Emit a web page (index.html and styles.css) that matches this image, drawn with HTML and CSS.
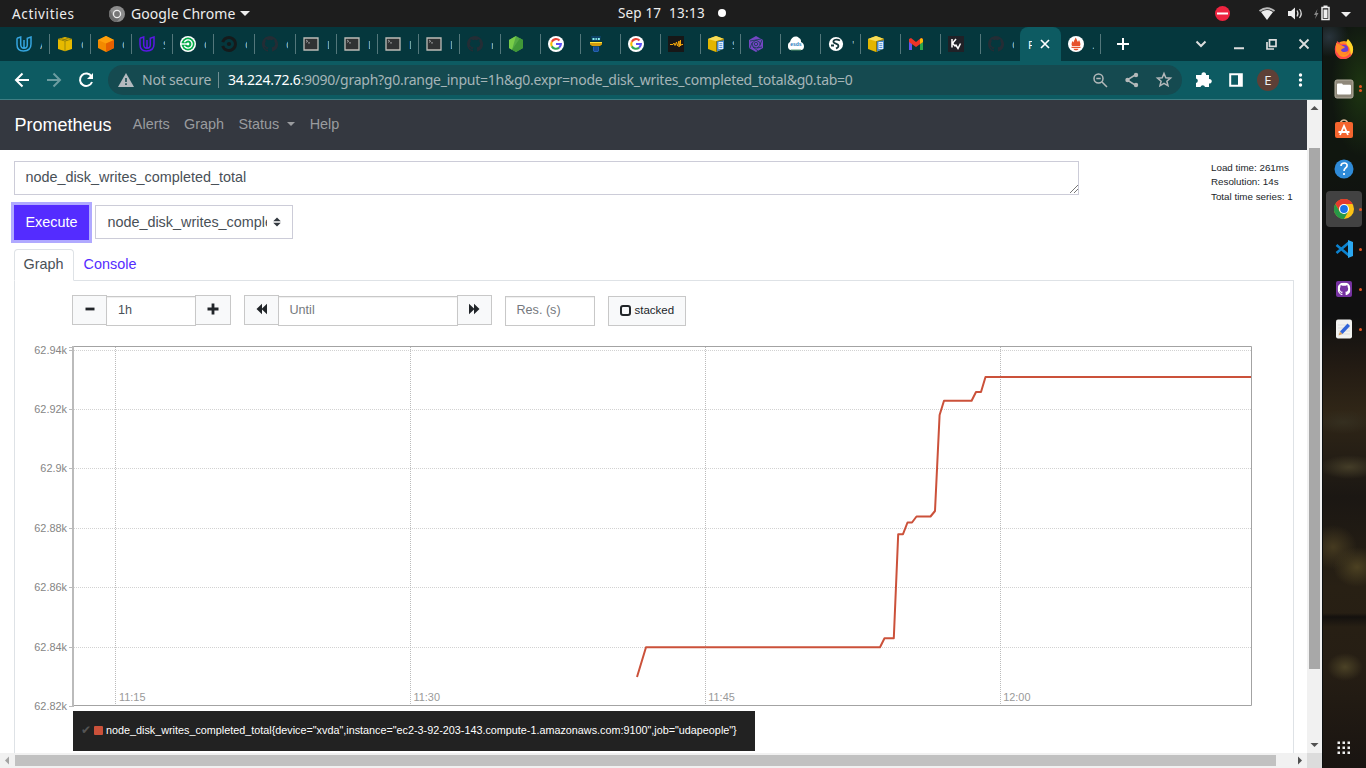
FILE: index.html
```html
<!DOCTYPE html>
<html lang="en">
<head>
<meta charset="utf-8">
<title>Prometheus Time Series Collection and Processing Server</title>
<link rel="stylesheet" href="styles.css">
</head>
<body>
<svg class="defs" aria-hidden="true">
  <symbol id="udacity" viewBox="0 0 16 16"><path d="M1 2.300 4.700 1v7.300c0 2.800 1.300 4 3.300 4M1 2.300v6.200c0 4.500 3 6.500 6.500 6.500 4.500 0 7.500-2.500 7.500-6.900V1l-3.700 1.300v6.500c0 2.300-1.300 3.500-3.300 3.500V4" fill="none" stroke="currentColor" stroke-width="1.500"/></symbol>
  <symbol id="cube" viewBox="0 0 16 16"><path d="m1 3 7-2 7 2v10l-7 2.300L1 13z" fill="#e6ba00"/><path d="m1 3 7 2 7-2M8 5v10.300M3.500 2.300l7 2M12 1.900l-7 2.300" fill="none" stroke="#7f730d" stroke-width=".7"/></symbol>
  <symbol id="orange" viewBox="0 0 16 16"><path d="m0 4 8-4 8 4v8l-8 4-8-4z" fill="#f38a00"/><path d="m0 4 8 3.500L16 4 8 0z" fill="#ff9f0b"/><path d="m8 7.500 8-3.500v8l-8 4z" fill="#e66000"/></symbol>
  <symbol id="cubedoc" viewBox="0 0 16 16"><path d="m0 3 8-3 8 3v9.500L8 16l-8-3z" fill="#e3b600"/><path d="m0 3 8-3 8 3-8 2.200z" fill="#f8dc57"/><path d="m8 5.200 8-2.200v9.500L8 16z" fill="#8d7508"/><path d="m9 5.500 7-1.300v8.500L9 15.500z" fill="#4488ce"/><path d="M10.500 6h4.500v7h-4.500z" fill="#e9f2fc"/><path d="M11.300 7.700h3M11.300 9.600h3M11.300 11.500h3" stroke="#4488ce" stroke-width=".9"/></symbol>
  <symbol id="circle" viewBox="0 0 16 16"><circle cx="8" cy="8" r="2.100" fill="currentColor"/><path d="M1.700 6.200A6.500 6.500 0 1 1 1.700 9.800" fill="none" stroke="currentColor" stroke-width="2.900"/></symbol>
  <symbol id="circle-green" viewBox="0 0 16 16"><circle cx="8" cy="8" r="8" fill="#fff"/><circle cx="8" cy="8" r="6.500" fill="#04aa49"/><path d="M4.300 6.300A4.100 4.100 0 1 1 4.300 9.700" fill="none" stroke="#fff" stroke-width="1.400"/><path d="M0 7.300h7.500v1.400H0z" fill="#fff"/><circle cx="8" cy="8" r="1.400" fill="#fff"/></symbol>
  <symbol id="github" viewBox="0 0 16 16"><path d="M8 0C3.58 0 0 3.58 0 8c0 3.54 2.29 6.53 5.47 7.59.4.07.55-.17.55-.38v-1.49c-2.01.37-2.53-.49-2.69-.94-.09-.23-.48-.94-.82-1.13-.28-.15-.68-.52-.01-.53.63-.01 1.08.58 1.23.82.72 1.21 1.87.87 2.33.66.07-.52.28-.87.51-1.07-1.78-.2-3.64-.89-3.64-3.95 0-.87.31-1.59.82-2.15-.08-.2-.36-1.02.08-2.12 0 0 .67-.21 2.2.82a7.6 7.6 0 0 1 4 0c1.53-1.04 2.2-.82 2.2-.82.44 1.1.16 1.92.08 2.12.51.56.82 1.27.82 2.15 0 3.07-1.87 3.75-3.65 3.95.29.25.54.73.54 1.48v2.2c0 .21.15.46.55.38A8 8 0 0 0 8 0z" fill="currentColor"/></symbol>
  <symbol id="term" viewBox="0 0 16 16"><path d="M1 2h14v12H1z" fill="#303233" stroke="#bdbdb8" stroke-width="1.300"/><path d="m3 4 1.700 1.200L3 6.400M5 6.900h2" fill="none" stroke="#ccc" stroke-width=".7"/></symbol>
  <symbol id="node" viewBox="0 0 16 16"><path d="m8 0 7 4v8l-7 4-7-4V4z" fill="#53a844"/><path d="M8 0 1 4v8l3 1.8z" fill="#77cc48"/><path d="m12 2.300 3 1.700v8l-7 4-4-2.200z" fill="#409737"/></symbol>
  <symbol id="google" viewBox="0 0 16 16"><circle cx="8" cy="8" r="8" fill="#fff"/><g fill="none" stroke-width="2.100"><path d="M11.500 4.500A4.800 4.800 0 0 0 3.800 5.700" stroke="#ea4335"/><path d="M3.800 5.700a5 5 0 0 0 0 4.700" stroke="#fbbc05"/><path d="M3.800 10.400a4.800 4.800 0 0 0 7.300 1.200" stroke="#34a853"/><path d="M8 8h4.900a4.800 4.800 0 0 1-1.800 3.600" stroke="#6051f6"/></g></symbol>
  <symbol id="tower" viewBox="0 0 16 16"><path d="M3 0h10l-1 5H4z" fill="#0d4268"/><path d="M4.500 2h2v2h-2zm3 0h1.300v2H7.500zm2.300 0h2v2h-2z" fill="#8ff2ed"/><path d="M2 6h12v2.500L12 10H4L2 8.500z" fill="#d49c0e"/><path d="M2 6h12v1H2z" fill="#ffe43a"/><path d="M5 10.500h6v4l-1 1.500H6l-1-1.500z" fill="#2460b0"/><path d="M7 11v4m2-4v4" stroke="#0a2f62" stroke-width=".8"/></symbol>
  <symbol id="audio" viewBox="0 0 16 16"><path d="M0 0h16v16H0z" fill="#171717"/><path d="M2 8.500h3l1-1.500 1 2.500L8.500 6l1 4L11 5v6l1.500-7v6l.8-1.500H15" fill="none" stroke="#f3a70c" stroke-width="1"/></symbol>
  <symbol id="hex" viewBox="0 0 16 16"><path d="m8 0 7 4v8l-7 4-7-4V4z" fill="#7446c4"/><path d="m2 5 6-1 4 2.500v3L9 12l-4-1-1-4 4-3 5-1M4 7l-2 5m3-1 5 4M12 9l2-5M9 12l5-1" fill="none" stroke="#063a40" stroke-width=".7"/><circle cx="8" cy="8" r="1.700" fill="none" stroke="#063a40" stroke-width=".7"/></symbol>
  <symbol id="cloud" viewBox="0 0 16 16"><path d="M3 14C-1 14-1 7 2 6 3 1 8-1 11 2c2 1 2 2 2 4 4 1 4 8 0 8z" fill="#fff"/><text x="2.200" y="9.700" font-family="Liberation Sans,sans-serif" font-size="5" font-weight="bold" fill="#2779bc">esds</text><path d="M3 14h10" stroke="#5b9c72"/></symbol>
  <symbol id="globe" viewBox="0 0 16 16"><circle cx="8" cy="8" r="7.100" fill="#fff"/><path d="M12 4.500C8.500 2.500 5 4 5.500 6c.5 2 5 1.500 5 4 0 1.500-1.500 2-2.500 2.500M3 9.500h3" fill="none" stroke="#14363a" stroke-width="1.800"/></symbol>
  <symbol id="gmail" viewBox="0 0 16 16"><path d="M1 4v10h3V6" fill="#6257ef"/><path d="M12 6v8h3V4" fill="#2ba84a"/><path d="m1 3 2-1 5 4 5-4 2 1v3l-7 5-7-5z" fill="#ed3328"/><path d="m12 3 2-1 1 2v2l-3 2z" fill="#fbbc04"/></symbol>
  <symbol id="kv" viewBox="0 0 16 16"><path d="M0 0h16v16H0z" fill="#202127"/><path d="M4 3v8.500M8 3 4.500 7.200l3 3.300M7.500 8.500l2.500 4 2.500-5" fill="none" stroke="#fff" stroke-width="1.500"/></symbol>
  <symbol id="prom" viewBox="0 0 16 16"><circle cx="8" cy="8" r="8" fill="#fff"/><path d="M4 10c-1-2 0-4 .5-5l1 1.500C6 4 7 4 7.500 1.500 9 3 9 5 10 6l1-2c1 2 2 4 1 6z" fill="#e6522c"/><path d="M3.500 10.700h9v1.400h-9zm2 2h5c-.6 2-4.400 2-5 0z" fill="#e6522c"/></symbol>
  <symbol id="chrome" viewBox="0 0 20 20"><circle cx="10" cy="10" r="10" fill="#fbc116"/><path d="M1.300 5A10 10 0 0 1 18.700 5H10L5.700 12.500z" fill="#e33b2e"/><path d="M1.300 5A10 10 0 0 0 10 20l4.300-7.500H5.700z" fill="#279847"/><circle cx="10" cy="10" r="5" fill="#fff"/><circle cx="10" cy="10" r="3.900" fill="#1a73e8"/></symbol>
</svg>

<header class="topbar">
  <div class="top-left"><span class="activities">Activities</span>
    <svg class="gray-chrome" viewBox="0 0 16 16"><circle cx="8" cy="8" r="8" fill="#8c8c8c"/><path d="M1 4A8 8 0 0 0 8 16l4-6H4z" fill="#6d6d6d"/><circle cx="8" cy="8" r="4.200" fill="#eee"/><circle cx="8" cy="8" r="2.900" fill="#777"/></svg>
    <span class="app-name">Google Chrome</span><i class="caret"></i></div>
  <div class="clock"><span>Sep 17</span><span>13:13</span><i></i></div>
  <svg class="tray" viewBox="0 0 156 27"><circle cx="12.500" cy="12.500" r="7.500" fill="#ee2440"/><path d="M7 12.500h11" stroke="#fff" stroke-width="2"/><path d="M51 11q6-4 12 0l-6 8z" fill="#eee"/><path d="M49.500 10q7.500-5.500 15 0" fill="none" stroke="#bbb" stroke-width="1.800"/><path d="M78 10h3l4-3.500v12L81 15h-3z" fill="#eee"/><path d="M87 9.500q2 3 0 6M89.500 8q3.500 4.500 0 9" fill="none" stroke="#ddd" stroke-width="1.200"/><path d="m107.500 8-3.500 6h2l-1 4 3.500-6h-2z" fill="#888"/><path d="M112 6.500h7v12h-7z" fill="none" stroke="#eee" stroke-width="1.500"/><path d="M113.500 8.500h4V17h-4zM113.500 4.500h4V6h-4z" fill="#eee"/><path d="M131 11h10l-5 5z" fill="#eee"/></svg>
</header>

<div class="desktop">
<main class="browser">
  <div class="tabs">
    <div class="tab wide"><svg class="sky"><use href="#udacity"/></svg><b>A</b></div>
    <div class="tab wide"><svg><use href="#cube"/></svg><b>C</b></div>
    <div class="tab wide"><svg><use href="#orange"/></svg><b>C</b></div>
    <div class="tab wide"><svg class="violet"><use href="#udacity"/></svg><b>S</b></div>
    <div class="tab wide"><svg><use href="#circle-green"/></svg><b>C</b></div>
    <div class="tab wide"><svg class="black"><use href="#circle"/></svg><b>C</b></div>
    <div class="tab wide"><svg class="slate"><use href="#github"/></svg><b>C</b></div>
    <div class="tab wide"><svg><use href="#term"/></svg><b>L</b></div>
    <div class="tab wide"><svg><use href="#term"/></svg><b>L</b></div>
    <div class="tab wide"><svg><use href="#term"/></svg><b>L</b></div>
    <div class="tab wide"><svg><use href="#term"/></svg><b>L</b></div>
    <div class="tab wide"><svg class="slate"><use href="#github"/></svg><b>n</b></div>
    <div class="tab"><svg><use href="#node"/></svg></div>
    <div class="tab"><svg><use href="#google"/></svg></div>
    <div class="tab"><svg><use href="#tower"/></svg></div>
    <div class="tab"><svg><use href="#google"/></svg></div>
    <div class="tab"><svg><use href="#audio"/></svg></div>
    <div class="tab"><svg><use href="#cubedoc"/></svg><b>S</b></div>
    <div class="tab"><svg><use href="#hex"/></svg></div>
    <div class="tab"><svg><use href="#cloud"/></svg></div>
    <div class="tab"><svg><use href="#globe"/></svg><b>'</b></div>
    <div class="tab"><svg><use href="#cubedoc"/></svg></div>
    <div class="tab"><svg><use href="#gmail"/></svg></div>
    <div class="tab"><svg><use href="#kv"/></svg></div>
    <div class="tab last"><svg class="slate"><use href="#github"/></svg><b>C</b></div>
    <div class="tab active"><b>P</b><svg viewBox="0 0 10 10"><path d="m1 1 8 8m0-8-8 8"/></svg></div>
    <div class="tab after"><svg><use href="#prom"/></svg><b>.</b></div>
    <svg class="window-controls" viewBox="0 0 222 34"><g fill="none" stroke="#fff" stroke-width="2"><path d="M17 17h12m-6-6v12"/><path d="M96.500 14.500l4.500 4.500 4.500-4.500M134 21.200h10" stroke="#ddd"/><path d="M169.500 12.800h6.500v6.500h-6.500zm-2.500 2.200v7h7" stroke="#ddd" stroke-width="1.700"/><path d="m199.500 12.500 9 9m0-9-9 9" stroke="#ddd" stroke-width="1.800"/></g></svg>
  </div>

  <div class="toolbar">
    <svg class="nav-icons" viewBox="0 0 108 38"><g fill="none" stroke="#fff" stroke-width="2"><path d="M29 19H16m6.500-6.500L16 19l6.500 6.500"/><path d="M47 19h13m-6.500-6.500L60 19l-6.500 6.500" stroke="#6c9da1"/><path d="M91.500 15.500A6.200 6.200 0 1 0 92 21"/></g><path d="M93 12v6h-6z" fill="#fff"/></svg>
    <div class="omnibox">
      <svg class="warn" viewBox="0 0 16 14"><path d="M8 0 16 14H0z" fill="#b4babf"/><path d="M7.200 5h1.600v4H7.200zm0 5.200h1.600V12H7.200z" fill="#164a50"/></svg>
      <span class="insecure">Not secure</span><i class="divider"></i>
      <span class="url"><em>34.224.72.6</em>:9090/graph?g0.range_input=1h&amp;g0.expr=node_disk_writes_completed_total&amp;g0.tab=0</span>
      <svg class="omni-icons" viewBox="0 0 90 30"><g fill="none" stroke="#b4b9ba" stroke-width="1.500"><circle cx="12.500" cy="13.500" r="4.500"/><path d="m16 17 5 5M10.300 13.500h4.400M50 9.500 41 15l9 5.500"/><path d="m78 8.500 1.800 4.300 4.700.4-3.600 3 1.100 4.600-4-2.400-4 2.400 1.100-4.600-3.600-3 4.700-.4z"/></g><g fill="#b4b9ba"><circle cx="50" cy="10" r="2.200"/><circle cx="41.500" cy="15" r="2.200"/><circle cx="50" cy="20" r="2.200"/></g></svg>
    </div>
    <svg class="ext-icons" viewBox="0 0 140 38"><path d="M16 14h3.500a2.300 2.300 0 1 1 4.500 0H27v4a2.300 2.300 0 1 1 0 4.500V26h-4a2.300 2.300 0 0 0-4.500 0H14v-4a2.300 2.300 0 0 0 0-4.500V14z" fill="#fff"/><path d="M48.200 13.200h11.600v11.600H48.200z" fill="none" stroke="#fff" stroke-width="2"/><path d="M56 13h4v12h-4z" fill="#fff"/><circle cx="86" cy="19" r="11" fill="#5d4037"/><text x="82.200" y="23.500" font-family="Noto Sans,sans-serif" font-size="13" fill="#eee">E</text><g fill="#fff"><circle cx="118.500" cy="14" r="1.700"/><circle cx="118.500" cy="19" r="1.700"/><circle cx="118.500" cy="24" r="1.700"/></g></svg>
  </div>

  <div class="viewport">
    <div class="page">
      <nav class="navbar"><a class="brand">Prometheus</a><a>Alerts</a><a>Graph</a><a>Status<i></i></a><a>Help</a></nav>
      <section class="query">
        <div class="row">
          <div class="expression"><span>node_disk_writes_completed_total</span><svg viewBox="0 0 9 9"><path d="M1 9 9 1M5 9l4-4" stroke="#777" fill="none"/></svg></div>
          <div class="stats">Load time: 261ms<br>Resolution: 14s<br>Total time series: 1</div>
        </div>
        <div class="row actions">
          <button class="execute">Execute</button>
          <div class="metric"><span>node_disk_writes_completed_total</span><svg viewBox="0 0 8 10"><path d="M4 .5 7.800 4.300H.2zm0 9L.2 5.700h7.600z" fill="#343a40"/></svg></div>
        </div>
        <div class="view-tabs"><div class="current">Graph</div><div class="other">Console</div></div>
        <div class="panel">
          <div class="controls">
            <div class="group"><div class="btn"><svg viewBox="0 0 12 12"><path d="M1.500 6h9" stroke="#212529" stroke-width="2.800"/></svg></div><div class="field dark w90">1h</div><div class="btn wplus"><svg viewBox="0 0 12 12"><path d="M.5 6h11M6 .5v11" stroke="#212529" stroke-width="2.800"/></svg></div></div>
            <div class="group"><div class="btn"><svg viewBox="0 0 12 12"><path d="M.5 6 6 .8v10.400zm5 0L11 .8v10.400z" fill="#212529"/></svg></div><div class="field w180">Until</div><div class="btn"><svg viewBox="0 0 12 12"><path d="M10.500 6 5 .8v10.400zm-5 0L0 .8v10.400z" fill="#212529"/></svg></div></div>
            <div class="field w90">Res. (s)</div>
            <div class="stacked"><i></i>stacked</div>
          </div>
          <svg class="chart" viewBox="30 341 1224 370">
            <g stroke="#d2d2d2" stroke-dasharray="1 1"><path d="M74 350.500H1251M74 409.500H1251M74 468.500H1251M74 528.500H1251M74 587.500H1251M74 647.500H1251"/><path d="M115.500 347v358M410.500 347v358M705.500 347v358M1000.500 347v358" stroke="#bbb"/></g>
            <path d="M73 346.500h1178.500v359H73" fill="none" stroke="#a3a3a3"/>
            <path d="M73 346v360" stroke="#bbb" stroke-width="2"/>
            <path d="M69 347.500h5M69 350.500h5M69 409.500h5M69 468.500h5M69 528.500h5M69 587.500h5M69 647.500h5M69 706.500h5" stroke="#bbb"/>
            <polyline fill="none" stroke="#cb513a" stroke-width="2" stroke-linejoin="round" points="637,677 646,647.300 880,647.300 884.500,638.300 893.800,638.300 898.200,534.200 903,534.200 907.500,522.500 912,522.500 916.500,516.500 930.500,516.500 935,511 939.600,415 944,400.800 971.600,400.800 976,392 981,392 985.500,377 1251,377"/>
            <g class="ylab"><text x="67" y="354">62.94k</text><text x="67" y="413">62.92k</text><text x="67" y="472">62.9k</text><text x="67" y="532">62.88k</text><text x="67" y="591">62.86k</text><text x="67" y="651">62.84k</text><text x="67" y="710">62.82k</text></g>
            <g class="xlab"><text x="119" y="701">11:15</text><text x="413.500" y="701">11:30</text><text x="708.300" y="701">11:45</text><text x="1003.200" y="701">12:00</text></g>
          </svg>
          <div class="legend"><span class="check">✔</span><i></i><span>node_disk_writes_completed_total{device="xvda",instance="ec2-3-92-203-143.compute-1.amazonaws.com:9100",job="udapeople"}</span></div>
        </div>
      </section>
    </div>
    <div class="vscroll"><svg viewBox="0 0 15 15"><path d="m3.500 10 4-4 4 4z" fill="#505050"/></svg><i></i><svg viewBox="0 0 15 15"><path d="m3.500 6 4 4 4-4z" fill="#505050"/></svg></div>
    <div class="hscroll"><svg viewBox="0 0 15 15"><path d="M9 3.500 5 7.500l4 4z" fill="#a3a3a3"/></svg><i></i><svg viewBox="0 0 15 15"><path d="m6 3.500 4 4-4 4z" fill="#505050"/></svg></div>
    <div class="corner"></div>
  </div>
</main>

<aside class="dock">
  <div class="app"><svg viewBox="0 0 20 20"><circle cx="10" cy="11" r="9" fill="#ff9420"/><path d="M1 12C0 7 3 5 3 2l4 3c4-2 8 2 8 5a5 5 0 0 1-10 1C2 15 7 20 13 17c5-3 5-9 2-14 6 5 5 14-1 16C6 23 1 17 1 12z" fill="#ff4b48"/><path d="M14 0c5 5 7 11 3 16-1-2 0-7-3-9-2-2-2-5 0-7z" fill="#ffd629"/><circle cx="10" cy="10" r="4" fill="#673ed6"/><path d="M2 4c4 1 6 3 9 4-1 2-3 1-4 3 0 2 4 3 7 1-1 5-9 6-12 0z" fill="#ff8a28"/></svg></div>
  <div class="app dots2"><svg viewBox="0 0 20 20"><rect x="1" y="1" width="18" height="18" rx="2" fill="#8f887a" stroke="#b4ae9f"/><path d="M3 5.500q0-1 1-1h4l1 1.300h7q1 0 1 1v7.700q0 1-1 1H4q-1 0-1-1z" fill="#fff"/></svg></div>
  <div class="app"><svg viewBox="0 0 20 20"><path d="M6.500 3q3.500-4 7 0" fill="none" stroke="#ddbd9d" stroke-width="1.500"/><rect x="1" y="3" width="18" height="16" rx="2" fill="#f4652e"/><path d="m6 16 4-9 4 9M4.500 13h11" fill="none" stroke="#fff" stroke-width="1.800"/></svg></div>
  <div class="app"><svg viewBox="0 0 20 20"><circle cx="10" cy="10" r="9.500" fill="#2f8bd8"/><path d="M7 7c0-4 7-4 6 0-.4 2-3 2-3 5m0 2v2" fill="none" stroke="#fff" stroke-width="1.700"/></svg></div>
  <div class="app selected dot"><svg><use href="#chrome"/></svg></div>
  <div class="app dot"><svg viewBox="0 0 20 20"><path d="M15 3.500 2.500 14M15 16.500 2.500 6" fill="none" stroke="#0c82cf" stroke-width="2.600"/><path d="m14 1 5 2v14l-5 2z" fill="#2ba8f2"/></svg></div>
  <div class="app dot"><svg viewBox="0 0 20 20"><rect x="2" y="2" width="16" height="16" rx="2" fill="#7632a1"/><svg x="3.500" y="3.500" width="13" height="13" color="#fff"><use href="#github"/></svg></svg></div>
  <div class="app dot"><svg viewBox="0 0 20 20"><rect x="2" y=".5" width="16" height="19" rx="2" fill="#f2f2f0"/><path d="M4 6h12M4 9h12M4 12h12M4 15h12" stroke="#ddd"/><path d="m6 12.500 7.500-8 2.500 2.500-7.500 8z" fill="#3064d8"/><path d="M4.500 16.500 6 12.500 8.500 15z" fill="#d5a064"/></svg></div>
  <svg class="grid" viewBox="0 0 14 14"><g fill="#eee"><path d="M.5.5H3V3H.5zm5 0H8V3H5.500zm5 0H13V3h-2.500zm-10 5H3V8H.5zm5 0H8V8H5.500zm5 0H13V8h-2.500zm-10 5H3V13H.5zm5 0H8V13H5.500zm5 0H13V13h-2.500z"/></g></svg>
</aside>
</div>
</body>
</html>
```
FILE: styles.css
```css
*{box-sizing:border-box}
body{margin:0;width:1366px;height:768px;overflow:hidden;font-family:"Liberation Sans",Arial,sans-serif;background:#fff}
svg{display:block;flex:none}
.defs{position:absolute;width:0;height:0}
.topbar{height:27px;background:#1d1d1d;display:grid;grid-template-columns:618px 592px 156px;align-items:center;color:#eee;font-family:"Noto Sans",sans-serif;font-size:14px;line-height:26px}
.top-left{display:flex;align-items:center;padding:0 0 1px 12px}
.activities{width:97px;letter-spacing:.65px;font-size:13.500px}
.gray-chrome{width:16px;height:16px}
.app-name{margin-left:6px;width:105px;letter-spacing:.08px;white-space:nowrap}
.caret{margin-left:4px;border:5px solid transparent;border-top-color:#eee;border-bottom:0}
.clock{display:flex;align-items:center;font-size:13.500px;padding-bottom:2px}
.clock span:first-child{width:51px;letter-spacing:.15px}
.clock span:nth-child(2){width:49px;letter-spacing:.3px}
.clock i{width:8px;height:8px;border-radius:50%;background:#fff}
.tray{width:156px;height:27px}
.desktop{display:flex;height:741px}
.browser{width:1322px;display:flex;flex-direction:column}
.tabs{height:34px;background:#05373d;display:flex;padding-left:8px}
.tab{width:40px;height:34px;display:flex;align-items:center;padding-left:8px;position:relative;color:#a9bdc0;font-family:"Noto Sans",sans-serif;font-size:11px}
.tab.wide{width:41px}
.tab svg{width:16px;height:16px}
.tab b{font-weight:400;display:block;width:2px;overflow:hidden;margin-left:8px}
.tab::after{content:"";position:absolute;right:-1px;top:7px;width:1px;height:20px;background:#53777b}
.tab.last::after,.tab.active::after{display:none}
.sky{color:#35a5df}
.violet{color:#5b18e5}
.black{color:#151a1b}
.slate{color:#242d35}
.tab.active{width:41px;background:#0d5b62;border-radius:8px 8px 0 0;color:#fff}
.tab.active b{width:4px;margin-left:0}
.tab.active svg{width:10px;height:10px;margin-left:8px;fill:none;stroke:#fff;stroke-width:1.700}
.tab.after{width:39px;padding-left:7px}
.window-controls{width:222px;height:34px}
.toolbar{height:39px;background:#0d5b62;border-bottom:1px solid #3f7e83;display:flex;align-items:center}
.nav-icons{width:108px;height:38px}
.omnibox{width:1074px;height:30px;border-radius:15px;background:#154a50;display:flex;align-items:center;padding-left:10px;color:#a5b5b8;font-family:"Noto Sans",sans-serif;font-size:14px;white-space:nowrap}
.warn{width:16px;height:14px}
.insecure{margin-left:8px;width:76px;letter-spacing:-.2px;padding-bottom:2px}
.divider{width:1px;height:16px;background:#708f93}
.url{margin-left:9px;width:858px;letter-spacing:-.25px;padding-bottom:2px}
.url em{font-style:normal;color:#fff}
.omni-icons{width:90px;height:30px}
.ext-icons{width:140px;height:38px}
.viewport{height:668px;display:grid;grid-template-columns:1307px 15px;grid-template-rows:653px 15px}
.page{overflow:hidden;background:#fff}
.navbar{height:50px;background:#343840;display:flex;align-items:center;padding:0 0 1px 14.400px;color:#9a9c9f;font-size:14.400px;gap:14.400px}
.navbar a:not(.brand){padding-bottom:1px}
.brand{color:#fff;font-size:18px;margin-right:7px;padding-top:1px}
.navbar i{display:inline-block;margin-left:8px;vertical-align:3px;border:4.300px solid transparent;border-top-color:#9a9c9f;border-bottom:0}
.query{padding:11px 13px 0 14px;color:#495057;font-size:14.400px}
.row{display:flex;align-items:flex-start;justify-content:space-between;height:34px}
.expression{width:1065px;height:34px;border:1px solid #ccccd8;display:flex;align-items:center;justify-content:space-between;padding:0 0 2px 10.400px}
.expression svg{width:9px;height:9px;align-self:flex-end;margin-bottom:-1px}
.stats{width:83px;font-size:9.800px;line-height:14.400px;color:#212529;white-space:nowrap}
.actions{margin-top:10px;justify-content:flex-start;gap:6px}
.execute{width:75px;height:35px;border:0;padding:0 0 2px;background:#542cff;color:#fff;font:14.400px "Liberation Sans",sans-serif;box-shadow:0 0 0 3px #b0a9ff}
.metric{width:198px;height:34px;border:1px solid #ccccd8;display:flex;align-items:center;padding-left:11.400px}
.metric span{width:160px;overflow:hidden;white-space:nowrap}
.metric svg{width:8px;height:10px;margin-left:6px}
.view-tabs{height:31px;margin-top:10px;display:flex;font-size:14.400px;line-height:29px}
.current{width:60px;height:32px;border:1px solid #dee2e6;border-bottom-color:#fff;border-radius:4px 4px 0 0;padding-left:8.600px;background:#fff;z-index:1}
.other{color:#542cff;margin:1px 0 0 9.600px}
.panel{width:1280px;height:520px;border:1px solid #dee2e6;padding-top:14px}
.controls{height:31px;padding-left:57px;display:flex;gap:13px;align-items:flex-start}
.group{display:flex}
.btn{width:35px;height:30px;border:1px solid #c8c8c8;background:#f8f9fa;display:flex;align-items:center;justify-content:center;padding-bottom:2px}
.btn svg{width:12px;height:12px}
.wplus{width:36px}
.field{height:30px;margin-top:1px;border:1px solid #c8c8c8;padding-left:10.500px;font-size:12.600px;line-height:26px;color:#75797e;background:#fff;box-shadow:inset 0 1px 1px #eee}
.group .field{margin-left:-1px;margin-right:-1px}
.field.dark{color:#495057;padding-left:11px}
.w90{width:90px}
.w180{width:180px}
.stacked{width:78px;height:30px;margin-top:1px;border:1px solid #c8c8c8;background:#f8f9fa;display:flex;align-items:center;padding:0 0 2px 10.500px;font-size:11.500px;color:#212529}
.stacked i{width:11px;height:11px;border:2px solid #212529;border-radius:3px;margin-right:4px}
.chart{width:1224px;height:370px;margin:15px 0 0 15px}
.chart text{font-size:10.900px;font-family:"Liberation Sans",sans-serif;fill:#858585}
.ylab{text-anchor:end}
.chart .xlab text{fill:#999}
.legend{margin-left:58px;width:682px;height:40px;background:#222;color:#fff;display:flex;align-items:center;padding:0 0 2px 8px;font-size:10.800px;white-space:nowrap}
.check{width:13px;color:#555;font-family:"DejaVu Sans",sans-serif;font-size:12px}
.legend i{width:9px;height:9px;background:#cb513a;border-radius:1px;margin-right:3px}
.vscroll{background:#f1f1f1;display:flex;flex-direction:column;padding-bottom:1px}
.vscroll svg,.hscroll svg{width:15px;height:15px}
.vscroll i{width:11px;height:521px;background:#a8a8a8;margin:33px 0 68px 2px}
.hscroll{background:#f1f1f1;display:flex}
.hscroll i{width:1261px;height:11px;background:#c1c1c1;margin:2px 16px 0 0}
.corner{background:#dcdcdc}
.dock{width:44px;display:flex;flex-direction:column;align-items:center;padding:4px 1px 0 0;border-left:1px solid #0c0e0e;background:
radial-gradient(18px 14px at 22px 640px,#4b4226,transparent),
radial-gradient(24px 20px at 34px 540px,#4c4122,transparent),
radial-gradient(24px 22px at 10px 520px,#453a20,transparent),
radial-gradient(30px 12px at 26px 440px,#443d28,transparent),
radial-gradient(30px 12px at 20px 395px,#352f20,transparent),
radial-gradient(30px 70px at 38px 60px,#1d3511,transparent),
radial-gradient(20px 20px at 6px 10px,#29343c,transparent),
linear-gradient(transparent 586px,#14110e 590px,transparent 600px),
linear-gradient(#101611,#10160f 130px,#101010 200px,#101010 290px,#231b13 340px,#302617 385px,#1b1713 470px,#282014 560px,#261e14 640px,#191411)}
.app{width:36px;height:36px;margin-bottom:4px;border-radius:4px;display:flex;align-items:center;justify-content:center;position:relative;flex:none}
.app>svg{width:20px;height:20px}
.selected{background:#424242}
.dot::after,.dots2::after{content:"";position:absolute;right:0;top:16.500px;width:3px;height:3px;border-radius:50%;background:#e95420}
.dots2::after{top:14px;box-shadow:0 4px #e95420}
.grid{width:14px;height:14px;margin:auto 0 13px}
```
